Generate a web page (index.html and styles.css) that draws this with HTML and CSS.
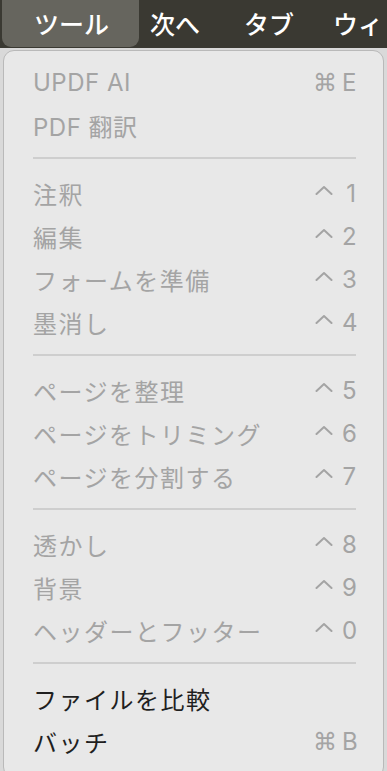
FILE: index.html
```html
<!DOCTYPE html>
<html lang="ja">
<head>
<meta charset="utf-8">
<title>ツール</title>
<link rel="stylesheet" href="styles.css">
</head>
<body>
<div class="menubar">
  <div class="mb-item mb-active">ツール</div>
  <div class="mb-item mb-next">次へ</div>
  <div class="mb-item mb-tab">タブ</div>
  <div class="mb-item mb-win">ウィ</div>
</div>
<div class="menu">
  <div class="row dis"><span class="label latin">UPDF AI</span><span class="sc"><span class="cmd">⌘</span><span class="key">E</span></span></div>
  <div class="row dis"><span class="label latin">PDF 翻訳</span></div>
  <div class="sep"></div>
  <div class="row dis"><span class="label">注釈</span><span class="sc"><svg class="ctl" viewBox="0 0 18 10"><polyline points="1.5,9 9,2 16.5,9"/></svg><span class="key">1</span></span></div>
  <div class="row dis"><span class="label">編集</span><span class="sc"><svg class="ctl" viewBox="0 0 18 10"><polyline points="1.5,9 9,2 16.5,9"/></svg><span class="key">2</span></span></div>
  <div class="row dis"><span class="label">フォームを準備</span><span class="sc"><svg class="ctl" viewBox="0 0 18 10"><polyline points="1.5,9 9,2 16.5,9"/></svg><span class="key">3</span></span></div>
  <div class="row dis"><span class="label">墨消し</span><span class="sc"><svg class="ctl" viewBox="0 0 18 10"><polyline points="1.5,9 9,2 16.5,9"/></svg><span class="key">4</span></span></div>
  <div class="sep"></div>
  <div class="row dis"><span class="label">ページを整理</span><span class="sc"><svg class="ctl" viewBox="0 0 18 10"><polyline points="1.5,9 9,2 16.5,9"/></svg><span class="key">5</span></span></div>
  <div class="row dis"><span class="label">ページをトリミング</span><span class="sc"><svg class="ctl" viewBox="0 0 18 10"><polyline points="1.5,9 9,2 16.5,9"/></svg><span class="key">6</span></span></div>
  <div class="row dis"><span class="label">ページを分割する</span><span class="sc"><svg class="ctl" viewBox="0 0 18 10"><polyline points="1.5,9 9,2 16.5,9"/></svg><span class="key">7</span></span></div>
  <div class="sep"></div>
  <div class="row dis"><span class="label">透かし</span><span class="sc"><svg class="ctl" viewBox="0 0 18 10"><polyline points="1.5,9 9,2 16.5,9"/></svg><span class="key">8</span></span></div>
  <div class="row dis"><span class="label">背景</span><span class="sc"><svg class="ctl" viewBox="0 0 18 10"><polyline points="1.5,9 9,2 16.5,9"/></svg><span class="key">9</span></span></div>
  <div class="row dis"><span class="label">ヘッダーとフッター</span><span class="sc"><svg class="ctl" viewBox="0 0 18 10"><polyline points="1.5,9 9,2 16.5,9"/></svg><span class="key">0</span></span></div>
  <div class="sep"></div>
  <div class="row"><span class="label">ファイルを比較</span></div>
  <div class="row"><span class="label">バッチ</span><span class="sc dim"><span class="cmd">⌘</span><span class="key">B</span></span></div>
</div>
</body>
</html>
```
FILE: styles.css
```css
html, body {
  margin: 0;
  padding: 0;
}
body {
  width: 387px;
  height: 771px;
  overflow: hidden;
  background: #d9d9d9;
  font-family: Inter, "Noto Sans CJK JP", "DejaVu Sans", sans-serif;
}
.menubar {
  height: 48px;
  background: #3a3932;
  display: flex;
  align-items: stretch;
  overflow: hidden;
}
.mb-item {
  color: #ffffff;
  font-size: 25px;
  font-weight: 500;
  display: flex;
  align-items: center;
  padding-bottom: 2px;
  box-sizing: border-box;
  white-space: nowrap;
  flex-shrink: 0;
}
.mb-active {
  margin-left: 2px;
  width: 137px;
  height: 47px;
  padding-left: 32px;
  background: #66655e;
  border-radius: 0 0 9px 9px;
}
.mb-next {
  margin-left: 11px;
}
.mb-tab {
  margin-left: 44px;
}
.mb-win {
  margin-left: 39px;
}
.menu {
  margin: 2px 3px 0 3px;
  height: 716px;
  background: #e8e8e8;
  border: 1px solid #b9b9b9;
  border-radius: 11px;
  padding-top: 10px;
  box-sizing: content-box;
}
.row {
  height: 43px;
  display: flex;
  align-items: center;
  justify-content: space-between;
  padding: 0 27px 0 29px;
  font-size: 24px;
  color: #1f1f1f;
}
.label {
  letter-spacing: 1.5px;
  white-space: nowrap;
}
.label.latin {
  letter-spacing: 0.5px;
}
.row.dis {
  color: #a4a4a4;
}
.sc {
  display: flex;
  align-items: center;
  color: #a4a4a4;
}
.cmd {
  font-family: "DejaVu Sans", sans-serif;
  font-size: 24px;
  width: 20px;
}
.key {
  margin-left: 9px;
  width: 14px;
  text-align: right;
}
.ctl {
  width: 18px;
  height: 10px;
  margin-top: -8px;
  fill: none;
  stroke: #a4a4a4;
  stroke-width: 2;
  stroke-linecap: round;
  stroke-linejoin: round;
}
.sep {
  height: 25px;
  display: flex;
  align-items: center;
  padding: 0 27px 0 29px;
  box-sizing: border-box;
  padding-bottom: 4px;
}
.sep::before {
  content: "";
  flex: 1;
  height: 2px;
  background: #cecece;
}
```
